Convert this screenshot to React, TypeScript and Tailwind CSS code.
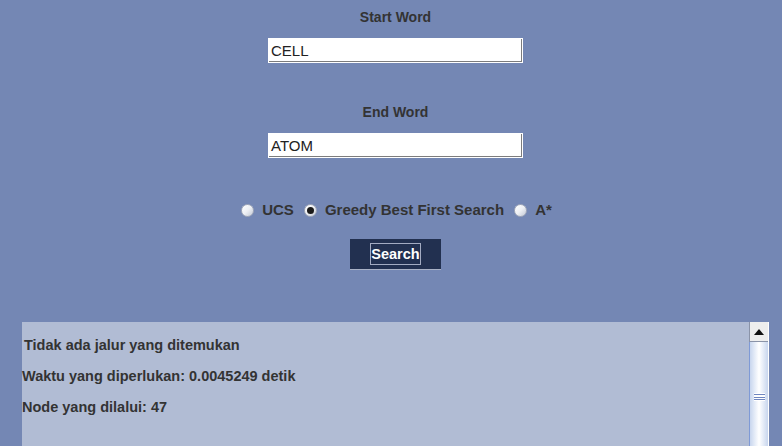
import React from "react";

function Radio({ checked, label }: { checked?: boolean; label: string }) {
  return (
    <div className="flex items-center gap-[8px]">
      <div className="w-[13px] h-[13px] rounded-full border border-[#a4abbb] bg-gradient-to-br from-white via-[#eef0f4] to-[#c3c9d6] flex items-center justify-center">
        {checked && <div className="w-[7px] h-[7px] rounded-full bg-[#1a1a1a]" />}
      </div>
      <span className="text-[15px] font-bold text-[#333333] leading-[18px]">{label}</span>
    </div>
  );
}

function Field({ value }: { value: string }) {
  return (
    <div className="w-[255px] h-[25px] bg-white border border-white shadow-[inset_-1px_-1px_0_#7c7c7c] flex items-center pl-[2px]">
      <span className="text-[15px] text-[#222222] leading-[18px]">{value}</span>
    </div>
  );
}

export default function App() {
  return (
    <div
      className="w-[782px] h-[446px] overflow-hidden bg-[#7487b4] flex flex-col pl-[22px] pr-[13px]"
      style={{ fontFamily: '"Liberation Sans", Arial, sans-serif' }}
    >
      <div className="flex flex-col items-center">
        <div className="mt-[9px] text-[14px] font-bold text-[#333333] leading-[16px]">Start Word</div>
        <div className="mt-[13px]">
          <Field value="CELL" />
        </div>
        <div className="mt-[41px] text-[14px] font-bold text-[#333333] leading-[16px]">End Word</div>
        <div className="mt-[13px]">
          <Field value="ATOM" />
        </div>
        <div className="mt-[43px] flex items-center gap-[10px] pl-[2px]">
          <Radio label="UCS" />
          <Radio checked label="Greedy Best First Search" />
          <Radio label="A*" />
        </div>
        <div className="mt-[20px] w-[91px] h-[31px] bg-[#223050] border-b border-[#a9b1c6] flex items-center justify-center">
          <div className="w-[51px] h-[22px] border border-[#a3abc2] flex items-center justify-center">
            <span className="text-[14.5px] font-bold text-white leading-[18px]">Search</span>
          </div>
        </div>
      </div>
      <div className="mt-[52px] flex flex-1">
        <div className="flex-1 bg-[#b1bcd4] pt-[8px] text-[14.5px] font-bold text-[#333333] leading-[31px]">
          <div className="ml-[2px]">Tidak ada jalur yang ditemukan</div>
          <div>Waktu yang diperlukan: 0.0045249 detik</div>
          <div>Node yang dilalui: 47</div>
        </div>
        <div className="w-[20px] flex flex-col border-r border-white bg-[#b1bcd4]">
          <div className="h-[20px] bg-[#eeeeee] border-l border-[#8a93a8] border-b border-b-[#8a93a8] flex items-center justify-center">
            <svg width="10" height="6" viewBox="0 0 10 6">
              <polygon points="0,6 10,6 5,0" fill="#111" />
            </svg>
          </div>
          <div className="flex-1 border-l border-[#7f9ad6] bg-gradient-to-r from-[#c8d6ee] via-white to-[#c8d6ee] flex flex-col items-center pt-[51px]">
            <div className="w-[11px] h-[8px] bg-white flex flex-col justify-between py-[1px]">
              <div className="h-px bg-[#6f86c0]" />
              <div className="h-px bg-[#6f86c0]" />
              <div className="h-px bg-[#6f86c0]" />
            </div>
          </div>
        </div>
      </div>
    </div>
  );
}
